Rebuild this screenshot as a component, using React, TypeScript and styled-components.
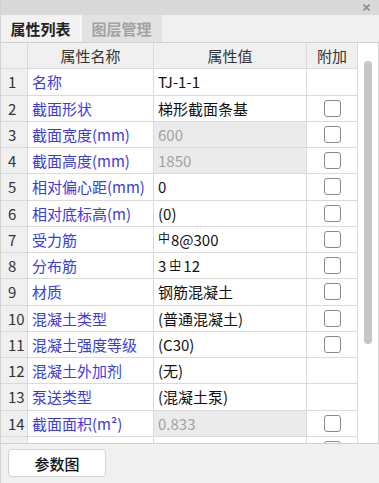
import React from 'react';
import styled, { createGlobalStyle } from 'styled-components';

const Global = createGlobalStyle`
  html, body { margin: 0; padding: 0; background: #f0f0f0; }
  body { font-family: "Noto Sans CJK SC", "Noto Sans", sans-serif; }
  * { box-sizing: border-box; }
`;

const Panel = styled.div`
  width: 379px;
  height: 483px;
  display: flex;
  flex-direction: column;
  overflow: hidden;
  border-left: 1px solid #d2d2d2;
  background: #f0f0f0;
`;

const TitleBar = styled.div`
  height: 15px;
  flex: none;
  background: #d9d9d9;
  display: flex;
  align-items: center;
  justify-content: flex-end;
  padding-right: 9px;
`;

const TabBar = styled.div`
  height: 28px;
  flex: none;
  display: flex;
  align-items: stretch;
  background: #f0f0f0;
  border-bottom: 1px solid #d0d0d0;
`;

const Tab = styled.div<{ $active?: boolean }>`
  width: 80px;
  margin-right: 1px;
  display: flex;
  align-items: center;
  justify-content: center;
  font-size: 15px;
  font-weight: 700;
  line-height: 1;
  color: ${(p) => (p.$active ? '#222' : '#a3a3a3')};
  background: ${(p) => (p.$active ? '#f2f2f2' : '#e2e2e2')};
  border-right: 1px solid ${(p) => (p.$active ? '#fafafa' : '#e2e2e2')};
`;

const Body = styled.div`
  flex: none;
  height: 401px;
  display: flex;
  border-bottom: 1px solid #d0d0d0;
  background: #fff;
`;

const Table = styled.div`
  width: 357px;
  height: 100%;
  overflow: hidden;
  display: flex;
  flex-direction: column;
`;

const Row = styled.div`
  flex: none;
  height: 26.25px;
  display: grid;
  grid-template-columns: 27px 126px 153px 51px;
`;

const Cell = styled.div<{ $kind?: 'num' | 'head' | 'name' | 'value' | 'check'; $disabled?: boolean }>`
  border-right: 1px solid #dadada;
  border-bottom: 1px solid #dadada;
  display: flex;
  align-items: center;
  white-space: nowrap;
  overflow: hidden;
  font-size: 15px;
  line-height: 1;
  padding-left: ${(p) =>
    p.$kind === 'num' ? '7px' : p.$kind === 'name' ? '4px' : p.$kind === 'value' ? '4px' : '0'};
  justify-content: ${(p) => (p.$kind === 'head' || p.$kind === 'check' ? 'center' : 'flex-start')};
  background: ${(p) =>
    p.$kind === 'num' || p.$kind === 'head' ? '#f0f0f0' : p.$disabled ? '#ebebeb' : '#fff'};
  color: ${(p) =>
    p.$kind === 'name'
      ? '#3b3be0'
      : p.$kind === 'head' || p.$kind === 'num'
      ? '#333'
      : p.$disabled
      ? '#a2a2a2'
      : '#111'};
`;

const Check = styled.span`
  width: 17px;
  height: 17px;
  border: 1px solid #8a8a8a;
  border-radius: 3px;
  background: #fff;
`;

const Rebar = styled.span<{ $bar?: boolean }>`
  position: relative;
  display: inline-block;
  font-size: 12px;
  line-height: 1;
  margin: ${(p) => (p.$bar ? '0 2px 0 3px' : '0 1px 0 0')};
  transform: translateY(-1px);
  &::after {
    content: '';
    display: ${(p) => (p.$bar ? 'block' : 'none')};
    position: absolute;
    left: 1px;
    right: 1px;
    bottom: 0;
    height: 1px;
    background: #111;
  }
`;

const ScrollTrack = styled.div`
  width: 21px;
  height: 100%;
  background: #fff;
  border-right: 1px solid #d6d6d6;
  padding: 18px 0 0 6px;
`;

const Thumb = styled.div`
  width: 8px;
  height: 283px;
  border-radius: 4px;
  background: #c6c6c6;
`;

const Footer = styled.div`
  flex: 1;
  padding: 5px 0 0 7px;
  background: #f0f0f0;
`;

const Button = styled.button`
  width: 98px;
  height: 28px;
  background: #fff;
  border: 1px solid #d2d2d2;
  border-radius: 4px;
  font-family: "Noto Sans CJK SC", sans-serif;
  font-size: 15px;
  font-weight: 500;
  color: #111;
  padding: 0;
  display: flex;
  align-items: center;
  justify-content: center;
  line-height: 1;
`;

type RowData = {
  n: number | '';
  name: string;
  value: React.ReactNode;
  disabled?: boolean;
  check: boolean;
};

const rows: RowData[] = [
  { n: 1, name: '名称', value: 'TJ-1-1', check: false },
  { n: 2, name: '截面形状', value: '梯形截面条基', check: true },
  { n: 3, name: '截面宽度(mm)', value: '600', disabled: true, check: true },
  { n: 4, name: '截面高度(mm)', value: '1850', disabled: true, check: true },
  { n: 5, name: '相对偏心距(mm)', value: '0', check: true },
  { n: 6, name: '相对底标高(m)', value: '(0)', check: true },
  {
    n: 7,
    name: '受力筋',
    value: (
      <>
        <Rebar>中</Rebar>8@300
      </>
    ),
    check: true,
  },
  {
    n: 8,
    name: '分布筋',
    value: (
      <>
        3<Rebar $bar>中</Rebar>12
      </>
    ),
    check: true,
  },
  { n: 9, name: '材质', value: '钢筋混凝土', check: true },
  { n: 10, name: '混凝土类型', value: '(普通混凝土)', check: true },
  { n: 11, name: '混凝土强度等级', value: '(C30)', check: true },
  { n: 12, name: '混凝土外加剂', value: '(无)', check: false },
  { n: 13, name: '泵送类型', value: '(混凝土泵)', check: false },
  { n: 14, name: '截面面积(m²)', value: '0.833', disabled: true, check: true },
  { n: '', name: '', value: '', check: true },
];

export default function App() {
  return (
    <>
      <Global />
      <Panel>
        <TitleBar>
          <svg width="7" height="7" viewBox="0 0 7 7">
            <path d="M0.5 0.5L6.5 6.5M6.5 0.5L0.5 6.5" stroke="#8c8c8c" strokeWidth="1.6" />
          </svg>
        </TitleBar>
        <TabBar>
          <Tab $active>属性列表</Tab>
          <Tab>图层管理</Tab>
        </TabBar>
        <Body>
          <Table>
            <Row>
              <Cell $kind="head" />
              <Cell $kind="head">属性名称</Cell>
              <Cell $kind="head">属性值</Cell>
              <Cell $kind="head">附加</Cell>
            </Row>
            {rows.map((r, i) => (
              <Row key={i}>
                <Cell $kind="num">{r.n}</Cell>
                <Cell $kind="name">{r.name}</Cell>
                <Cell $kind="value" $disabled={r.disabled}>
                  {r.value}
                </Cell>
                <Cell $kind="check">{r.check && <Check />}</Cell>
              </Row>
            ))}
          </Table>
          <ScrollTrack>
            <Thumb />
          </ScrollTrack>
        </Body>
        <Footer>
          <Button>参数图</Button>
        </Footer>
      </Panel>
    </>
  );
}
